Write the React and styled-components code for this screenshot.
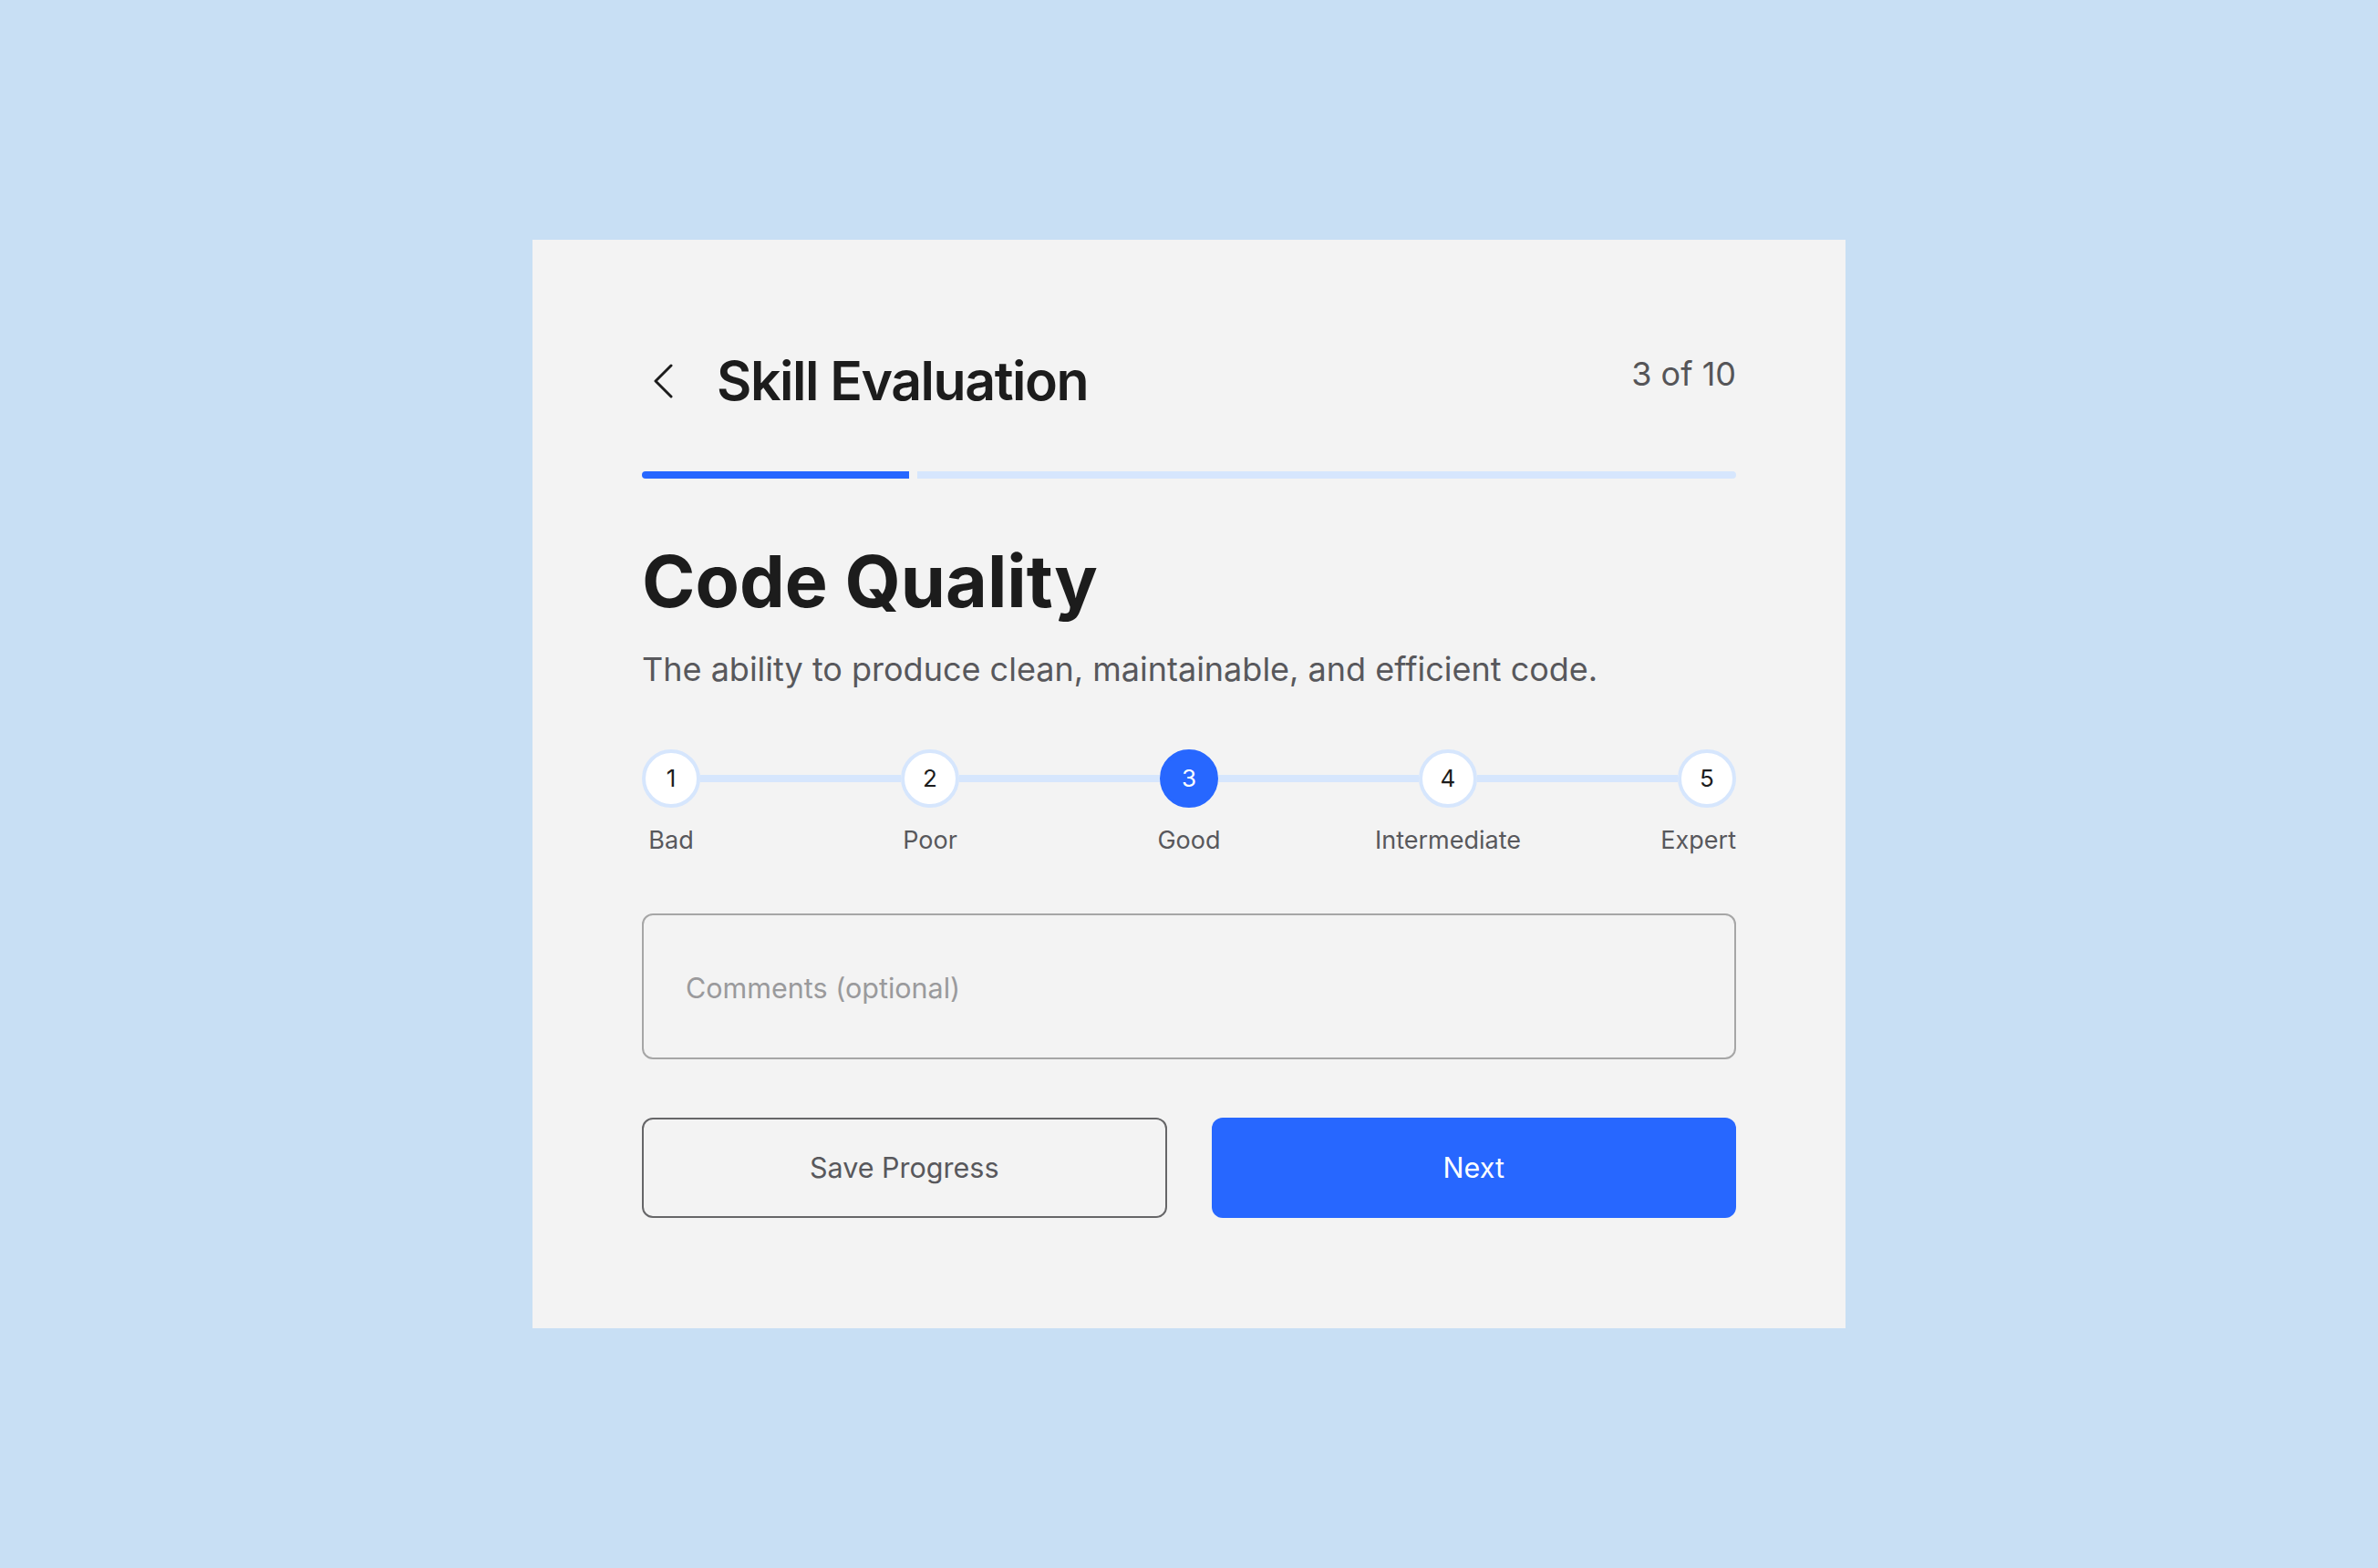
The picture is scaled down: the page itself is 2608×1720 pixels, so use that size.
import styled, { createGlobalStyle } from "styled-components";

const GlobalStyle = createGlobalStyle`
  * {
    box-sizing: border-box;
  }
  html,
  body {
    margin: 0;
    padding: 0;
    background-color: #c8dff4;
    font-family: Inter, "Noto Sans", sans-serif;
  }
`;

const Page = styled.div`
  display: flex;
  align-items: center;
  justify-content: center;
  width: 100%;
  min-height: 1720px;
`;

const Card = styled.div`
  width: 1440px;
  padding: 119px 120px 121px;
  background-color: #f3f3f3;
`;

const Header = styled.div`
  display: flex;
  justify-content: space-between;
  align-items: flex-start;
`;

const TitleGroup = styled.div`
  display: flex;
  align-items: center;
  gap: 47px;
`;

const BackButton = styled.button`
  display: flex;
  align-items: center;
  padding: 0;
  margin: 0 0 0 13px;
  border: none;
  background: none;
  color: #1c1c1c;
  cursor: pointer;
`;

const Title = styled.h1`
  margin: 0;
  font-size: 59px;
  font-weight: 600;
  line-height: 1.21;
  letter-spacing: -0.025em;
  color: #1c1c1c;
`;

const Counter = styled.span`
  margin-top: 7px;
  font-size: 36px;
  line-height: 1.21;
  color: #555558;
`;

const Track = styled.div`
  display: flex;
  gap: 9px;
  height: 8px;
  margin-top: 63px;
  border-radius: 4px;
  overflow: hidden;
`;

const TrackPart = styled.div`
  flex: ${(props) => (props.done ? "0 0 293px" : "1")};
  background-color: ${(props) => (props.done ? "#2767ff" : "#d6e6fd")};
`;

const Heading = styled.h2`
  margin: 65px 0 0;
  font-size: 79px;
  font-weight: 700;
  line-height: 1.21;
  color: #1c1c1c;
`;

const Description = styled.p`
  margin: 28px 0 0;
  font-size: 36px;
  line-height: 1.21;
  color: #58585c;
`;

const Steps = styled.div`
  display: flex;
  margin-top: 65px;
`;

const Step = styled.div`
  display: flex;
  flex-direction: column;
  align-items: ${(props) => (props.last ? "flex-end" : "center")};
  width: 64px;
  flex-shrink: 0;
`;

const Connector = styled.div`
  flex: 1;
  height: 8px;
  margin-top: 28px;
  background-color: #d6e6fd;
`;

const Circle = styled.div`
  display: flex;
  align-items: center;
  justify-content: center;
  width: 64px;
  height: 64px;
  border-radius: 50%;
  border: 4px solid ${(props) => (props.active ? "#2767ff" : "#d6e6fd")};
  background-color: ${(props) => (props.active ? "#2767ff" : "#ffffff")};
  color: ${(props) => (props.active ? "#ffffff" : "#1c1c1c")};
  font-size: 26px;
`;

const StepLabel = styled.span`
  margin-top: 20px;
  white-space: nowrap;
  font-size: 27px;
  line-height: 1.21;
  color: #58585c;
`;

const Comments = styled.textarea`
  display: block;
  width: 100%;
  height: 160px;
  margin-top: 63px;
  padding: 62px 46px 0;
  border: 2px solid #a6a6a6;
  border-radius: 12px;
  background: transparent;
  font-family: inherit;
  font-size: 30.5px;
  line-height: 1.21;
  color: #1c1c1c;
  resize: none;
  outline: none;

  &::placeholder {
    color: #9a9a9c;
  }
`;

const Actions = styled.div`
  display: grid;
  grid-template-columns: 1fr 1fr;
  gap: 49px;
  margin-top: 64px;
`;

const Button = styled.button`
  height: 110px;
  border-radius: 12px;
  border: ${(props) => (props.primary ? "none" : "2.5px solid #666668")};
  background-color: ${(props) => (props.primary ? "#2767ff" : "transparent")};
  color: ${(props) => (props.primary ? "#ffffff" : "#58585c")};
  font-family: inherit;
  font-size: 30.5px;
  cursor: pointer;
`;

const levels = ["Bad", "Poor", "Good", "Intermediate", "Expert"];

export default function App() {
  const selected = 3;

  return (
    <>
      <GlobalStyle />
      <Page>
        <Card>
          <Header>
            <TitleGroup>
              <BackButton aria-label="Back">
                <svg width="22" height="38" viewBox="0 0 22 38" fill="none">
                  <polyline
                    points="19,2 2,19 19,36"
                    stroke="currentColor"
                    strokeWidth="3"
                    strokeLinecap="round"
                    strokeLinejoin="round"
                  />
                </svg>
              </BackButton>
              <Title>Skill Evaluation</Title>
            </TitleGroup>
            <Counter>3 of 10</Counter>
          </Header>

          <Track>
            <TrackPart done />
            <TrackPart />
          </Track>

          <Heading>Code Quality</Heading>
          <Description>
            The ability to produce clean, maintainable, and efficient code.
          </Description>

          <Steps>
            {levels.map((label, i) => (
              <>
                {i > 0 && <Connector key={`c${i}`} />}
                <Step key={label} last={i === levels.length - 1}>
                  <Circle active={i + 1 === selected}>{i + 1}</Circle>
                  <StepLabel>{label}</StepLabel>
                </Step>
              </>
            ))}
          </Steps>

          <Comments placeholder="Comments (optional)" />

          <Actions>
            <Button>Save Progress</Button>
            <Button primary>Next</Button>
          </Actions>
        </Card>
      </Page>
    </>
  );
}
